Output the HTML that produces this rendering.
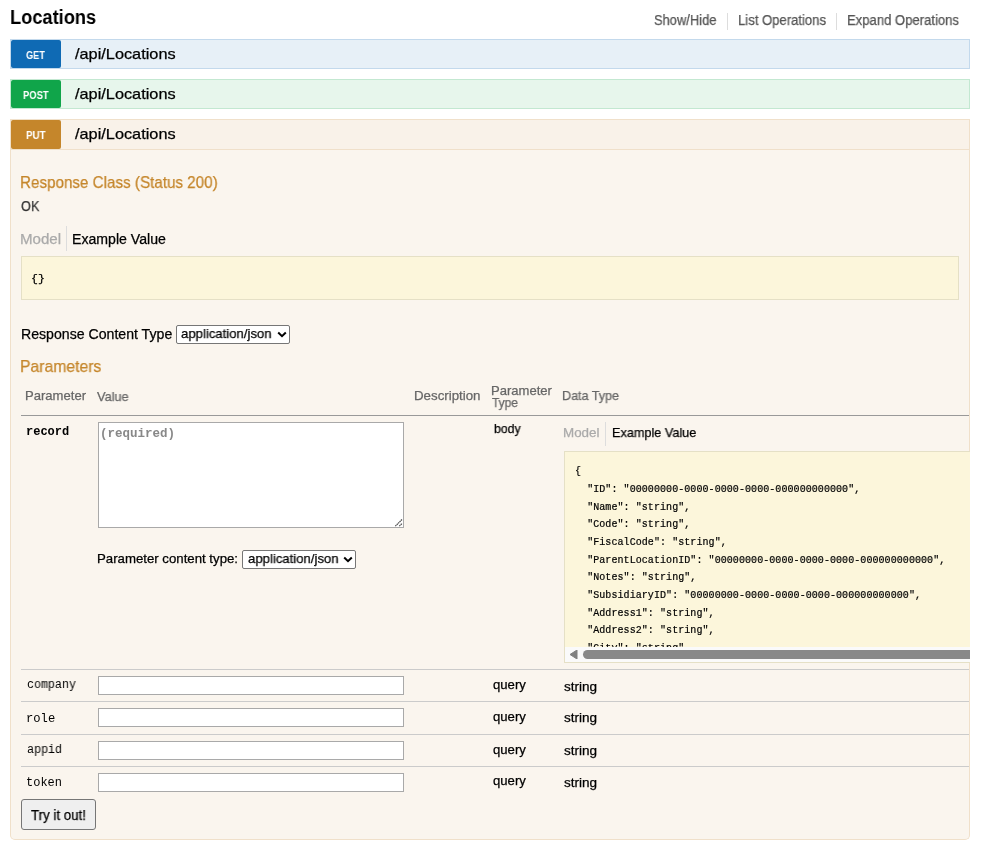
<!DOCTYPE html>
<html><head><meta charset="utf-8">
<style>
html,body{margin:0;padding:0;background:#fff;}
body{font-family:"Liberation Sans",sans-serif;color:#000;width:981px;height:853px;overflow:hidden;position:relative;}
.t{position:absolute;white-space:nowrap;line-height:1;transform-origin:0 0;will-change:transform;-webkit-text-stroke:0.25px currentColor;}
.sep{position:absolute;width:1px;background:#ddd;}
.bar{position:absolute;left:10px;width:958px;height:28px;}
.bar.get{top:39px;background:#e7f0f7;border:1px solid #c3d9ec;}
.bar.post{top:79px;background:#e7f6ec;border:1px solid #c3e8d1;}
.bar.put{top:119px;height:29px;background:#f9f2e9;border:1px solid #f0e0ca;}
.badge{position:absolute;left:0;top:0;width:50px;height:28px;border-radius:2px;}
.get .badge{background:#0f6ab4;}
.post .badge{background:#10a54a;}
.put .badge{background:#c5862b;height:29px;}
.content{position:absolute;left:10px;top:150px;width:958px;height:689px;background:#faf5ee;border:1px solid #f0e0ca;border-top:none;border-radius:0 0 5px 5px;}
.snip{position:absolute;background:#fcf6db;border:1px solid #e5e0c6;}
.snip2{position:absolute;left:564px;top:451px;width:406px;height:212px;background:#fcf6db;border:1px solid #e5e0c6;border-right:none;box-sizing:border-box;overflow:hidden;}
.sbar{position:absolute;left:0;top:195px;width:420px;height:15px;background:#fafafa;z-index:2;}
.sthumb{position:absolute;left:18px;top:3px;width:400px;height:9px;border-radius:5px;background:#898989;}
.line{position:absolute;left:21px;width:948px;height:1px;background:#cbcbcb;}
.inp{position:absolute;left:98px;width:304px;height:17px;background:#fff;border:1px solid #a9a9a9;}
.ta{position:absolute;left:98px;top:422px;width:304px;height:104px;background:#fff;border:1px solid #a9a9a9;}
.sel{position:absolute;background:#fff;border:1px solid #767676;border-radius:2px;box-sizing:border-box;}
.btn{position:absolute;left:21px;top:799px;width:73px;height:29px;background:#efefef;border:1px solid #767676;border-radius:3px;}
.j{position:absolute;left:0;white-space:pre;will-change:transform;-webkit-text-stroke:0.2px #000;font-family:"Liberation Mono",monospace;font-size:10px;letter-spacing:0.07px;line-height:1;color:#000;}
</style></head><body>

<div class="sep" style="left:727px;top:13px;height:17px"></div>
<div class="sep" style="left:836px;top:13px;height:17px"></div>
<div class="bar get"><div class="badge"></div></div>
<div class="bar post"><div class="badge"></div></div>
<div class="bar put"><div class="badge"></div></div>
<div class="content"></div>
<div class="sep" style="left:66px;top:226px;height:25px"></div>
<div class="snip" style="left:21px;top:256px;width:936px;height:42px"></div>
<div class="sel" style="left:176px;top:325px;width:114px;height:19px"><svg width="10" height="7" style="position:absolute;left:99.5px;top:5px" viewBox="0 0 10 7"><path d="M1.2 1.5 L5 5.2 L8.8 1.5" fill="none" stroke="#000" stroke-width="2"/></svg></div>
<div class="line" style="top:415px;background:#999"></div>
<div class="ta"></div><svg width="10" height="10" style="position:absolute;left:394px;top:518px" viewBox="0 0 10 10"><path d="M1.3 8.2 L8.2 1.3 M5.3 8.2 L8.2 5.3" stroke="#4a4a4a" stroke-width="1.2" stroke-dasharray="1.5 0.5" fill="none"/></svg>
<div class="sep" style="left:605px;top:422px;height:24px"></div>
<div class="snip2"><div class="sbar"><div class="sthumb"></div><svg width="8" height="9" style="position:absolute;left:5px;top:3px" viewBox="0 0 8 9"><path d="M7 0 L7 9 L0 4.5 Z" fill="#808080" stroke="#808080" stroke-width="1" stroke-linejoin="round"/></svg></div><div class="j" style="left:10.30px;top:15.45px">{</div><div class="j" style="left:10.30px;top:33.10px">  "ID": "00000000-0000-0000-0000-000000000000",</div><div class="j" style="left:10.30px;top:50.75px">  "Name": "string",</div><div class="j" style="left:10.30px;top:68.40px">  "Code": "string",</div><div class="j" style="left:10.30px;top:86.05px">  "FiscalCode": "string",</div><div class="j" style="left:10.30px;top:103.70px">  "ParentLocationID": "00000000-0000-0000-0000-000000000000",</div><div class="j" style="left:10.30px;top:121.35px">  "Notes": "string",</div><div class="j" style="left:10.30px;top:139.00px">  "SubsidiaryID": "00000000-0000-0000-0000-000000000000",</div><div class="j" style="left:10.30px;top:156.65px">  "Address1": "string",</div><div class="j" style="left:10.30px;top:174.30px">  "Address2": "string",</div><div class="j" style="left:10.30px;top:191.95px">  "City": "string",</div></div>
<div class="sel" style="left:242px;top:550px;width:114px;height:19px"><svg width="10" height="7" style="position:absolute;left:99.5px;top:5px" viewBox="0 0 10 7"><path d="M1.2 1.5 L5 5.2 L8.8 1.5" fill="none" stroke="#000" stroke-width="2"/></svg></div>
<div class="line" style="top:669px"></div>
<div class="line" style="top:701px"></div>
<div class="line" style="top:734px"></div>
<div class="line" style="top:766px"></div>
<div class="inp" style="top:676px"></div>
<div class="inp" style="top:708px"></div>
<div class="inp" style="top:741px"></div>
<div class="inp" style="top:773px"></div>
<div class="btn"></div>

<div class="t" id="locations" style="left:10.34px;top:7.20px;font-size:20px;font-weight:bold;-webkit-text-stroke:0;color:#000;transform:scaleX(0.9121);">Locations</div>
<div class="t" id="showhide" style="left:654.48px;top:13.38px;font-size:14px;color:#555;transform:scaleX(0.9215);">Show/Hide</div>
<div class="t" id="listops" style="left:737.56px;top:13.38px;font-size:14px;color:#555;transform:scaleX(0.9348);">List Operations</div>
<div class="t" id="expops" style="left:846.80px;top:13.38px;font-size:14px;color:#555;transform:scaleX(0.9344);">Expand Operations</div>
<div class="t" id="get" style="left:26.00px;top:50.10px;font-size:11px;font-weight:bold;-webkit-text-stroke:0;color:#fff;transform:scaleX(0.8345);">GET</div>
<div class="t" id="post" style="left:22.52px;top:90.10px;font-size:11px;font-weight:bold;-webkit-text-stroke:0;color:#fff;transform:scaleX(0.8543);">POST</div>
<div class="t" id="put" style="left:25.76px;top:130.10px;font-size:11px;font-weight:bold;-webkit-text-stroke:0;color:#fff;transform:scaleX(0.8911);">PUT</div>
<div class="t" id="path1" style="left:74.76px;top:45.70px;font-size:15px;color:#000;transform:scaleX(1.0872);">/api/Locations</div>
<div class="t" id="path2" style="left:74.76px;top:85.70px;font-size:15px;color:#000;transform:scaleX(1.0872);">/api/Locations</div>
<div class="t" id="path3" style="left:74.76px;top:125.70px;font-size:15px;color:#000;transform:scaleX(1.0872);">/api/Locations</div>
<div class="t" id="respclass" style="left:20.30px;top:173.66px;font-size:17px;color:#c5862b;transform:scaleX(0.8940);">Response Class (Status 200)</div>
<div class="t" id="ok" style="left:21.00px;top:198.70px;font-size:14px;color:#333;transform:scaleX(0.9079);">OK</div>
<div class="t" id="model1" style="left:20.08px;top:231.84px;font-size:14px;color:#aaa;transform:scaleX(1.0778);">Model</div>
<div class="t" id="exval1" style="left:72.06px;top:231.84px;font-size:14px;color:#000;transform:scaleX(1.0077);">Example Value</div>
<div class="t" id="braces" style="left:31.34px;top:273.80px;font-family:'Liberation Mono',monospace;font-size:11px;color:#000;transform:scaleX(1.0482);">{}</div>
<div class="t" id="rct" style="left:20.54px;top:326.92px;font-size:14px;color:#000;transform:scaleX(1.0085);">Response Content Type</div>
<div class="t" id="sel1" style="left:181.48px;top:327.18px;font-size:13.33px;color:#000;transform:scaleX(0.9851);">application/json</div>
<div class="t" id="params" style="left:20.32px;top:357.70px;font-size:17px;color:#c5862b;transform:scaleX(0.9260);">Parameters</div>
<div class="t" id="h_param" style="left:25.06px;top:389.44px;font-size:13px;color:#666;transform:scaleX(1.0053);">Parameter</div>
<div class="t" id="h_value" style="left:96.52px;top:389.66px;font-size:13px;color:#666;transform:scaleX(0.9814);">Value</div>
<div class="t" id="h_desc" style="left:414.34px;top:389.46px;font-size:13px;color:#666;transform:scaleX(1.0220);">Description</div>
<div class="t" id="h_ptype1" style="left:491.32px;top:384.42px;font-size:13px;color:#666;transform:scaleX(1.0026);">Parameter</div>
<div class="t" id="h_ptype2" style="left:492.02px;top:396.18px;font-size:13px;color:#666;transform:scaleX(0.9176);">Type</div>
<div class="t" id="h_dtype" style="left:562.34px;top:389.46px;font-size:13px;color:#666;transform:scaleX(0.9673);">Data Type</div>
<div class="t" id="record" style="left:26.06px;top:425.52px;font-family:'Liberation Mono',monospace;font-size:12px;font-weight:bold;-webkit-text-stroke:0;color:#000;transform:scaleX(1.0005);">record</div>
<div class="t" id="required" style="left:99.90px;top:428.04px;font-family:'Liberation Mono',monospace;font-size:12px;font-weight:bold;-webkit-text-stroke:0;color:#888;transform:scaleX(1.0412);">(required)</div>
<div class="t" id="body" style="left:493.50px;top:422.42px;font-size:13px;color:#000;transform:scaleX(0.9425);">body</div>
<div class="t" id="model2" style="left:563.34px;top:426.20px;font-size:13px;color:#aaa;transform:scaleX(1.0300);">Model</div>
<div class="t" id="exval2" style="left:611.56px;top:426.20px;font-size:13px;color:#000;transform:scaleX(0.9745);">Example Value</div>
<div class="t" id="pct" style="left:97.34px;top:552.20px;font-size:13px;color:#000;transform:scaleX(1.0164);">Parameter content type:</div>
<div class="t" id="sel2" style="left:248.00px;top:552.18px;font-size:13.33px;color:#000;transform:scaleX(0.9851);">application/json</div>
<div class="t" id="company" style="left:27.48px;top:678.94px;font-family:'Liberation Mono',monospace;font-size:12px;color:#000;-webkit-text-stroke:0;transform:scaleX(0.9701);">company</div>
<div class="t" id="role" style="left:26.06px;top:712.54px;font-family:'Liberation Mono',monospace;font-size:12px;color:#000;-webkit-text-stroke:0;transform:scaleX(1.0131);">role</div>
<div class="t" id="appid" style="left:26.76px;top:744.30px;font-family:'Liberation Mono',monospace;font-size:12px;color:#000;-webkit-text-stroke:0;transform:scaleX(0.9739);">appid</div>
<div class="t" id="token" style="left:26.06px;top:776.78px;font-family:'Liberation Mono',monospace;font-size:12px;color:#000;-webkit-text-stroke:0;transform:scaleX(0.9995);">token</div>
<div class="t" id="q1" style="left:493.00px;top:677.98px;font-size:13px;color:#000;transform:scaleX(1.0098);">query</div>
<div class="t" id="q2" style="left:493.00px;top:710.00px;font-size:13px;color:#000;transform:scaleX(1.0098);">query</div>
<div class="t" id="q3" style="left:493.00px;top:742.98px;font-size:13px;color:#000;transform:scaleX(1.0098);">query</div>
<div class="t" id="q4" style="left:493.00px;top:774.02px;font-size:13px;color:#000;transform:scaleX(1.0098);">query</div>
<div class="t" id="s1" style="left:564.24px;top:679.66px;font-size:13px;color:#000;transform:scaleX(1.0406);">string</div>
<div class="t" id="s2" style="left:564.24px;top:711.46px;font-size:13px;color:#000;transform:scaleX(1.0406);">string</div>
<div class="t" id="s3" style="left:564.24px;top:744.20px;font-size:13px;color:#000;transform:scaleX(1.0406);">string</div>
<div class="t" id="s4" style="left:564.24px;top:775.94px;font-size:13px;color:#000;transform:scaleX(1.0406);">string</div>
<div class="t" id="try" style="left:30.52px;top:807.62px;font-size:14px;color:#000;transform:scaleX(0.9499);">Try it out!</div>
</body></html>
